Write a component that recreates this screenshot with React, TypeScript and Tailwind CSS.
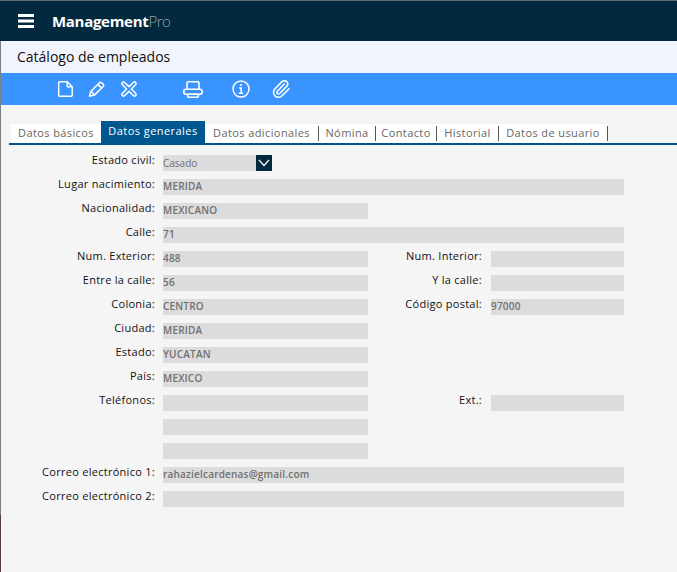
import { Paperclip } from "lucide-react"

const font = { fontFamily: '"Open Sans", sans-serif' }

const tabs = [
  { label: "Datos básicos", width: "w-[90px] ml-[2px]", noSep: true },
  { label: "Datos generales", width: "w-[104px]", active: true },
  { label: "Datos adicionales", width: "w-[114px]" },
  { label: "Nómina", width: "w-[57px]" },
  { label: "Contacto", width: "w-[61px]" },
  { label: "Historial", width: "w-[62px]" },
  { label: "Datos de usuario", width: "w-[109px]" },
]

const MenuIcon = () => (
  <svg width="16" height="14" viewBox="0 0 16 14" fill="white">
    <rect width="16" height="3" y="0" />
    <rect width="16" height="3" y="5.5" />
    <rect width="16" height="3" y="11" />
  </svg>
)

const FileIcon = () => (
  <svg width="15" height="16" viewBox="0 0 15 16" fill="none" stroke="white" strokeWidth="1.4" strokeLinejoin="round">
    <path d="M1.7.8h7.5l5 5v8.4a1 1 0 0 1-1 1H1.7a1 1 0 0 1-1-1V1.8a1 1 0 0 1 1-1z" />
    <path d="M9.2.8v5h5" />
  </svg>
)

const PencilIcon = () => (
  <svg width="18" height="16" viewBox="0 0 18 16" fill="none" stroke="white" strokeWidth="1.5" strokeLinejoin="round">
    <path d="M1.5 15.2l1.2-4.6 8.8-8.8a1.5 1.5 0 0 1 2.1 0l1.6 1.6a1.5 1.5 0 0 1 0 2.1l-8.8 8.6z" />
    <path d="M3 10.4l3.6 3.6M10 3.4l3.5 3.5" />
  </svg>
)

const CrossIcon = () => (
  <svg width="16" height="16" viewBox="0 0 16 16" fill="none" stroke="white" strokeWidth="1.5" strokeLinejoin="round">
    <path d="M3.2 1.2 8 5.6l4.6-4.4a1.2 1.2 0 0 1 1.7 0l.5.5a1.2 1.2 0 0 1 0 1.7L10.4 8l4.4 4.6a1.2 1.2 0 0 1 0 1.7l-.5.5a1.2 1.2 0 0 1-1.7 0L8 10.4l-4.6 4.4a1.2 1.2 0 0 1-1.7 0l-.5-.5a1.2 1.2 0 0 1 0-1.7L5.6 8 1.2 3.4a1.2 1.2 0 0 1 0-1.7l.5-.5a1.2 1.2 0 0 1 1.5 0z" />
  </svg>
)

const PrinterIcon = () => (
  <svg width="20" height="17" viewBox="0 0 20 17" fill="none" stroke="white" strokeWidth="1.6" strokeLinejoin="round">
    <path d="M4 8.2V2a1.2 1.2 0 0 1 1.2-1.2h9.6A1.2 1.2 0 0 1 16 2v6.2" />
    <rect x="0.8" y="8.2" width="18.4" height="5" rx="2.2" />
    <rect x="4.5" y="13.2" width="11" height="3" rx="1.5" />
  </svg>
)

const InfoIcon = () => (
  <svg width="18" height="18" viewBox="0 0 18 18" fill="none" stroke="white" strokeWidth="1.5">
    <circle cx="9" cy="9" r="8" />
    <circle cx="9" cy="5" r="1.1" fill="white" stroke="none" />
    <path d="M7.2 8h2v5M6.8 13.2h4.4" />
  </svg>
)

const Field = ({ value, width = "w-[205px]" }: { value?: string; width?: string }) => (
  <div className={`${width} h-4 bg-[#dcdcdc] text-[#707070] text-[10px] leading-[15px] tracking-[0.2px] font-semibold whitespace-nowrap overflow-hidden`}>
    {value}
  </div>
)

const Label = ({ text, width = "w-[155px]" }: { text?: string; width?: string }) => (
  <div className={`${width} h-4 text-right text-[11px] leading-[9px] tracking-[0.28px] text-[#111] whitespace-nowrap`}>{text}</div>
)

const Row = ({ label, value, long }: { label?: string; value?: string; long?: boolean }) => (
  <div className="flex gap-2">
    <Label text={label} />
    <Field value={value} width={long ? "w-[461px]" : "w-[205px]"} />
  </div>
)

const DoubleRow = ({ label, value, label2, value2 }: { label: string; value?: string; label2: string; value2?: string }) => (
  <div className="flex">
    <div className="flex gap-2">
      <Label text={label} />
      <Field value={value} />
    </div>
    <Label text={label2} width="w-[114px]" />
    <div className="ml-[9px]">
      <Field value={value2} width="w-[133px]" />
    </div>
  </div>
)

export default function App() {
  return (
    <div className="relative w-[677px] h-[572px] overflow-hidden bg-[#f5f5f5] flex flex-col" style={font}>
      {/* window edge showing at the left of the capture */}
      <div className="absolute left-0 top-[41px] h-[474px] w-px bg-[#7a7f85]" />
      <div className="absolute left-0 top-[515px] h-[57px] w-px bg-[#5a3a3a]" />
      <header className="h-[41px] shrink-0 bg-[#02293e] border-t border-[#5f6b73] flex items-center pl-[18px]">
        <MenuIcon />
        <div className="ml-[18px] text-[15px] font-bold text-white tracking-[-0.3px]">
          Management<span className="font-light text-[#8fa3ae] tracking-[-0.5px]">Pro</span>
        </div>
      </header>
      <div className="h-[32px] shrink-0 bg-[#f1f4fc] pl-[17px] pb-[2px] flex items-center text-[14px] text-[#111]">Catálogo de empleados</div>
      <div className="h-[32px] shrink-0 bg-[#3a94ff] flex items-center pl-[58px]">
        <FileIcon />
        <div className="ml-[15px]"><PencilIcon /></div>
        <div className="ml-[15px]"><CrossIcon /></div>
        <div className="ml-[46px]"><PrinterIcon /></div>
        <div className="ml-[29px]"><InfoIcon /></div>
        <Paperclip size={20} strokeWidth={1.8} color="white" className="ml-[21px]" />
      </div>
      <div className="mt-[16px] ml-[9px] h-[24px] flex items-end border-b-2 border-[#00568f]">
        {tabs.map((t) =>
          t.active ? (
            <div key={t.label} className={`${t.width} h-[22px] bg-[#00568f] text-white text-[11px] tracking-[0.45px] pb-[2px] flex items-center justify-center`}>{t.label}</div>
          ) : (
            <div key={t.label} className={`${t.width} h-[19px] bg-white text-[#666] text-[11px] tracking-[0.4px] flex items-center justify-center`}>
              <span className="flex-1 text-center">{t.label}</span>
              {!t.noSep && <span className="h-[15px] w-px bg-[#555]" />}
            </div>
          )
        )}
      </div>
      <div className="pt-[10px] flex flex-col gap-2">
        <div className="flex gap-2">
          <Label text="Estado civil:" />
          <div className="w-[109px] h-4 bg-[#dcdcdc] flex justify-between">
            <span className="text-[10px] leading-[16px] text-[#707070]">Casado</span>
            <span className="w-4 h-4 bg-[#02293e] flex items-center justify-center">
              <svg width="12" height="8" viewBox="0 0 12 8" fill="none" stroke="white" strokeWidth="1.2"><path d="M1 1l5 5.5L11 1" /></svg>
            </span>
          </div>
        </div>
        <Row label="Lugar nacimiento:" value="MERIDA" long />
        <Row label="Nacionalidad:" value="MEXICANO" />
        <Row label="Calle:" value="71" long />
        <DoubleRow label="Num. Exterior:" value="488" label2="Num. Interior:" />
        <DoubleRow label="Entre la calle:" value="56" label2="Y la calle:" />
        <DoubleRow label="Colonia:" value="CENTRO" label2="Código postal:" value2="97000" />
        <Row label="Ciudad:" value="MERIDA" />
        <Row label="Estado:" value="YUCATAN" />
        <Row label="País:" value="MEXICO" />
        <DoubleRow label="Teléfonos:" label2="Ext.:" />
        <Row />
        <Row />
        <Row label="Correo electrónico 1:" value="rahazielcardenas@gmail.com" long />
        <Row label="Correo electrónico 2:" long />
      </div>
    </div>
  )
}
